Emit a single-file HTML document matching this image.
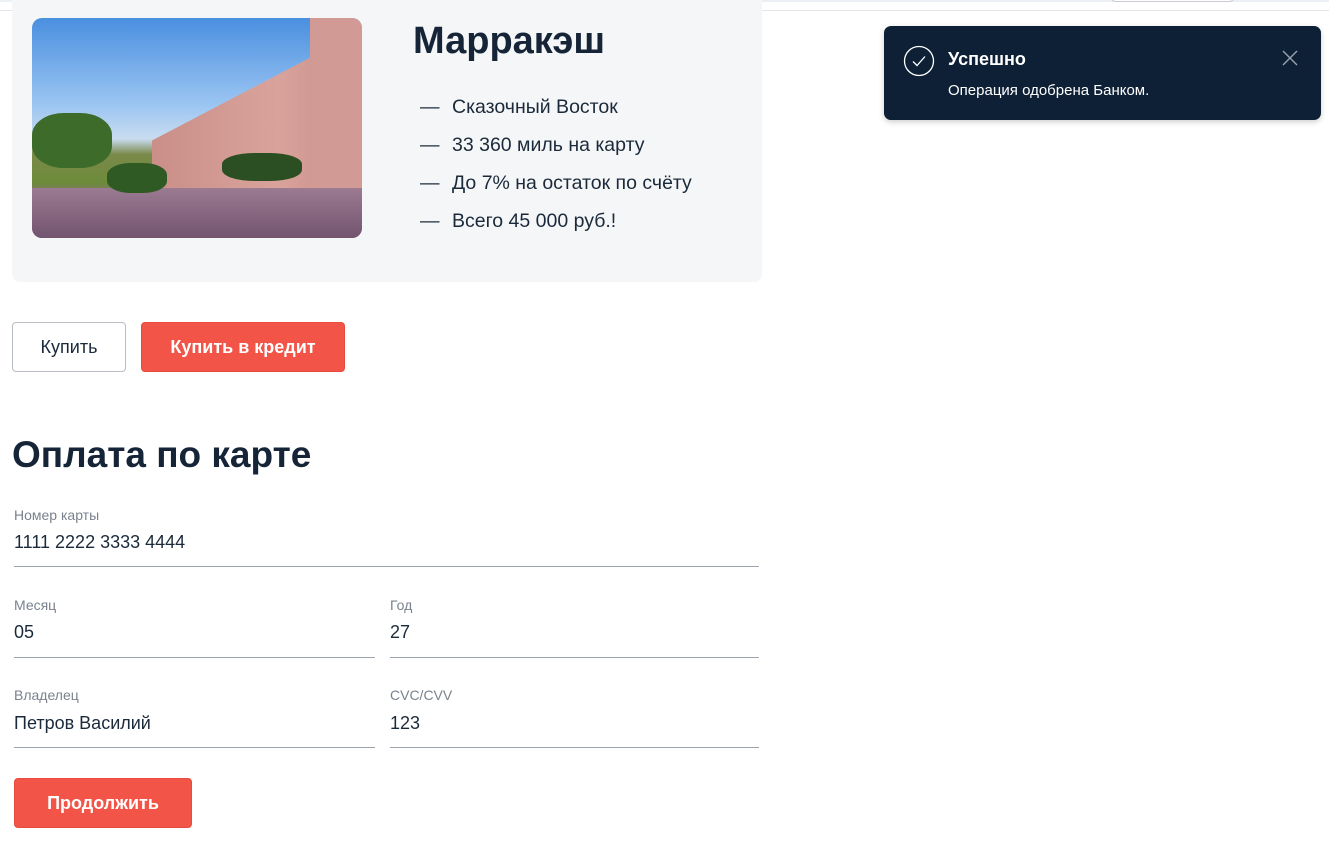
<!DOCTYPE html>
<html><head><meta charset="utf-8"><style>
*{box-sizing:border-box;margin:0;padding:0}
body{width:1329px;height:844px;overflow:hidden;background:#fff;font-family:"Liberation Sans",sans-serif;color:#1b2a3a;position:relative}
.abs{position:absolute}
.card{left:12px;top:0;width:750px;height:282px;background:#f5f6f8;border-radius:0 0 8px 8px}
.img{left:32px;top:18px;width:330px;height:220px;border-radius:10px;overflow:hidden;background:linear-gradient(180deg,#4a8fe0 0%,#9cc6f2 40%,#c9dcef 55%,#7a8a4a 62%,#6d8b3a 75%,#8e6d88 82%,#7c5a7a 100%)}
h1{font-size:38px;font-weight:bold;color:#152436}
.li{left:420px;font-size:19.5px;color:#1b2a3a}
.li span{display:inline-block;width:32px}
.btn{border-radius:4px;font-size:18px;height:50px;line-height:48px;text-align:center}
.lab{font-size:14px;color:#7a828c}
.val{font-size:18px;color:#1b2a3a}
.line{height:1px;background:#9aa2ab}
</style></head><body>
<div class="abs" style="left:0;top:0;width:1329px;height:2px;background:#eceff4"></div>
<div class="abs" style="left:0;top:10px;width:1329px;height:1px;background:#e4e6ea"></div>
<div class="abs" style="left:1110px;top:-10px;width:125px;height:12px;border:1px solid #c8ccd2;border-radius:10px;background:#fff"></div>
<div class="abs card"></div>
<div class="abs img">
 <div class="abs" style="left:120px;top:40px;width:210px;height:150px;background:linear-gradient(90deg,#c98f88,#d9a39c 60%,#c88a86);clip-path:polygon(0 55%,75% 0,100% 0,100% 100%,0 100%)"></div>
 <div class="abs" style="left:278px;top:0;width:52px;height:190px;background:#d19a95"></div>
 <div class="abs" style="left:0;top:170px;width:330px;height:50px;background:linear-gradient(180deg,#9b7a92,#73546f)"></div>
 <div class="abs" style="left:75px;top:145px;width:60px;height:30px;border-radius:40%;background:#2f5a24"></div>
 <div class="abs" style="left:190px;top:135px;width:80px;height:28px;border-radius:40%;background:#2b4f22"></div>
 <div class="abs" style="left:0;top:95px;width:80px;height:55px;border-radius:40%;background:#3d6c2a"></div>
</div>
<h1 class="abs" style="left:413px;top:20px">Марракэш</h1>
<div class="abs li" style="top:96px"><span>—</span>Сказочный Восток</div>
<div class="abs li" style="top:134px"><span>—</span>33 360 миль на карту</div>
<div class="abs li" style="top:172px"><span>—</span>До 7% на остаток по счёту</div>
<div class="abs li" style="top:210px"><span>—</span>Всего 45 000 руб.!</div>
<div class="abs btn" style="left:12px;top:322px;width:114px;border:1px solid #b9bec5;color:#1b2a3a">Купить</div>
<div class="abs btn" style="left:141px;top:322px;width:204px;background:#f25447;color:#fff;font-weight:bold;border:1px solid #e84a3d">Купить в кредит</div>
<div class="abs" style="left:12px;top:434px;font-size:37px;font-weight:bold;color:#152436">Оплата по карте</div>
<div class="abs lab" style="left:14px;top:507px">Номер карты</div>
<div class="abs val" style="left:14px;top:532px">1111 2222 3333 4444</div>
<div class="abs line" style="left:14px;top:566px;width:745px"></div>
<div class="abs lab" style="left:14px;top:597px">Месяц</div>
<div class="abs val" style="left:14px;top:622px">05</div>
<div class="abs line" style="left:14px;top:657px;width:361px"></div>
<div class="abs lab" style="left:390px;top:597px">Год</div>
<div class="abs val" style="left:390px;top:622px">27</div>
<div class="abs line" style="left:390px;top:657px;width:369px"></div>
<div class="abs lab" style="left:14px;top:687px">Владелец</div>
<div class="abs val" style="left:14px;top:713px">Петров Василий</div>
<div class="abs line" style="left:14px;top:747px;width:361px"></div>
<div class="abs lab" style="left:390px;top:687px">CVC/CVV</div>
<div class="abs val" style="left:390px;top:713px">123</div>
<div class="abs line" style="left:390px;top:747px;width:369px"></div>
<div class="abs btn" style="left:14px;top:778px;width:178px;background:#f25447;color:#fff;font-weight:bold;border:1px solid #e84a3d">Продолжить</div>
<div class="abs" style="left:884px;top:26px;width:437px;height:94px;background:#0d2036;border-radius:7px;box-shadow:0 2px 6px rgba(0,0,0,.2)">
 <svg class="abs" style="left:19px;top:19px" width="32" height="32" viewBox="0 0 32 32"><circle cx="16" cy="16" r="14.5" fill="none" stroke="#fff" stroke-width="1.3"/><path d="M10 16.5l4 4 8-9" fill="none" stroke="#fff" stroke-width="1.3"/></svg>
 <div class="abs" style="left:64px;top:23px;color:#fff;font-weight:bold;font-size:18px">Успешно</div>
 <div class="abs" style="left:64px;top:56px;color:#fff;font-size:15px">Операция одобрена Банком.</div>
 <svg class="abs" style="left:398px;top:24px" width="16" height="16" viewBox="0 0 16 16"><path d="M1 1L15 15M15 1L1 15" stroke="#9aa4b0" stroke-width="1.4"/></svg>
</div>
</body></html>
